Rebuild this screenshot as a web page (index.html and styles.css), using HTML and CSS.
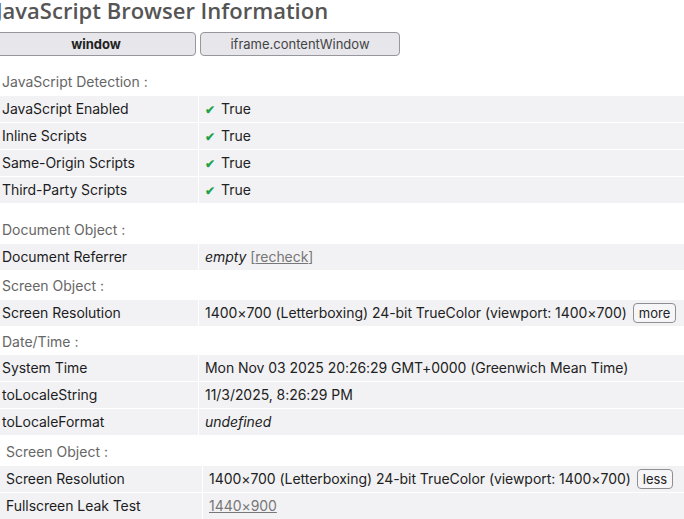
FILE: index.html
```html
<!DOCTYPE html>
<html>
<head>
<meta charset="utf-8">
<link rel="stylesheet" href="styles.css">
</head>
<body>
<div class="page">
  <header class="head">
    <h1 class="title">JavaScript Browser Information</h1>
    <div class="tabs">
      <button class="tab tab-active">window</button>
      <button class="tab">iframe.contentWindow</button>
    </div>
  </header>

  <div class="label">JavaScript Detection :</div>
  <table class="info first">
    <tr><td class="k">JavaScript Enabled</td><td class="v"><span class="check">✔</span>True</td></tr>
    <tr><td class="k">Inline Scripts</td><td class="v"><span class="check">✔</span>True</td></tr>
    <tr><td class="k">Same-Origin Scripts</td><td class="v"><span class="check">✔</span>True</td></tr>
    <tr><td class="k">Third-Party Scripts</td><td class="v"><span class="check">✔</span>True</td></tr>
  </table>

  <div class="label">Document Object :</div>
  <table class="info">
    <tr><td class="k">Document Referrer</td><td class="v"><em>empty</em> <span class="muted">[<span class="u">recheck</span>]</span></td></tr>
  </table>

  <div class="label">Screen Object :</div>
  <table class="info">
    <tr><td class="k">Screen Resolution</td><td class="v"><span class="vrow">1400×700 (Letterboxing) 24-bit TrueColor (viewport: 1400×700)<button class="mini">more</button></span></td></tr>
  </table>

  <div class="label tight">Date/Time :</div>
  <table class="info">
    <tr><td class="k">System Time</td><td class="v">Mon Nov 03 2025 20:26:29 GMT+0000 (Greenwich Mean Time)</td></tr>
    <tr><td class="k">toLocaleString</td><td class="v">11/3/2025, 8:26:29 PM</td></tr>
    <tr><td class="k">toLocaleFormat</td><td class="v"><em>undefined</em></td></tr>
  </table>

  <section class="nested">
    <div class="label">Screen Object :</div>
    <table class="info">
      <tr><td class="k">Screen Resolution</td><td class="v"><span class="vrow">1400×700 (Letterboxing) 24-bit TrueColor (viewport: 1400×700)<button class="mini">less</button></span></td></tr>
      <tr><td class="k">Fullscreen Leak Test</td><td class="v"><span class="muted u">1440×900</span></td></tr>
    </table>
  </section>
</div>
</body>
</html>
```
FILE: styles.css
```css
html, body {
  margin: 0;
  padding: 0;
  background: #ffffff;
  overflow: hidden;
}
body {
  font-family: Inter, "Liberation Sans", sans-serif;
  font-size: 14px;
  color: #1d1d1f;
}
.page {
  width: 684px;
}
.head {
  margin-left: -4px;
  margin-top: -3px;
}
.title {
  margin: 0;
  font-family: "Open Sans", sans-serif;
  font-weight: 600;
  font-size: 22px;
  line-height: 26px;
  height: 26px;
  color: #555555;
  white-space: nowrap;
}
.tabs {
  display: flex;
  gap: 4px;
  margin-top: 9px;
  margin-bottom: 11px;
}
.tab {
  width: 200px;
  height: 24px;
  padding: 0;
  border: 1px solid #96969c;
  border-radius: 4px;
  background: #e6e6eb;
  font-family: Inter, "Liberation Sans", sans-serif;
  font-size: 13px;
  color: #444444;
}
.tab-active {
  font-weight: 700;
  color: #222222;
}
.label {
  padding: 5px 0 4px 2px;
  line-height: 20px;
  color: #666666;
}
.label.tight {
  padding-bottom: 3px;
}
.info {
  width: 684px;
  border-collapse: separate;
  border-spacing: 0;
}
.info.first {
  margin-bottom: 11px;
}
.info td {
  background: #f2f2f4;
  height: 26px;
  padding: 0;
  border-bottom: 1px solid #ffffff;
  line-height: 26px;
  white-space: nowrap;
  letter-spacing: -0.05px;
}
.info td.k {
  width: 196px;
  padding-left: 2px;
  border-right: 1px solid #ffffff;
}
.info td.v {
  padding-left: 6px;
  color: #222222;
}
.check {
  color: #1fa34a;
  font-size: 12px;
  font-weight: 700;
  line-height: 1;
  display: inline-block;
  width: 16px;
  vertical-align: 0;
}
em {
  font-style: italic;
}
.muted {
  color: #777777;
}
.u {
  text-decoration: underline;
}
.vrow {
  display: inline-flex;
  align-items: center;
  gap: 6px;
}
.mini {
  height: 20px;
  padding: 0 5px;
  border: 1px solid #8e8e93;
  border-radius: 4px;
  background: #f6f6f8;
  font-family: Inter, "Liberation Sans", sans-serif;
  font-size: 13px;
  line-height: 18px;
  color: #222222;
}
.nested {
  margin-top: 1px;
}
.nested .label {
  padding-left: 6px;
}
.nested .info td.k {
  width: 196px;
  padding-left: 6px;
}
.nested .info td.v {
  padding-left: 6px;
}
```
